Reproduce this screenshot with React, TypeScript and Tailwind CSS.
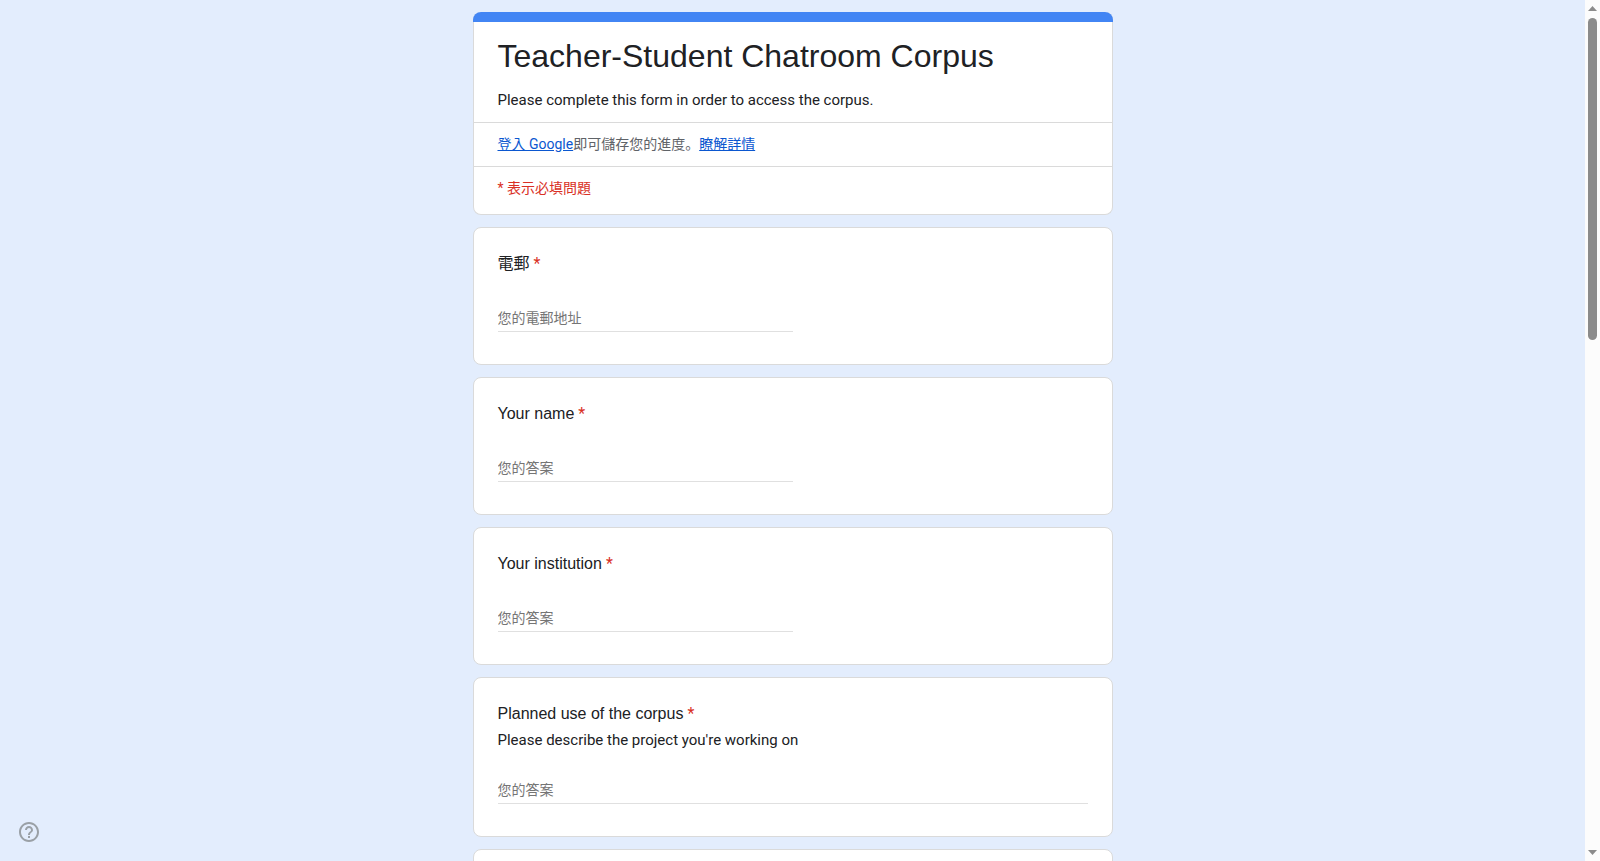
import { useId } from 'react';

type Question = {
  label: string;
  placeholder: string;
  description?: string;
  type?: 'text' | 'email';
  long?: boolean;
};

const questions: Question[] = [
  { label: '電郵', placeholder: '您的電郵地址', type: 'email' },
  { label: 'Your name', placeholder: '您的答案' },
  { label: 'Your institution', placeholder: '您的答案' },
  {
    label: 'Planned use of the corpus',
    description: "Please describe the project you're working on",
    placeholder: '您的答案',
    long: true,
  },
];

function QuestionCard({ label, placeholder, description, type = 'text', long }: Question) {
  const id = useId();
  return (
    <section className="rounded-lg border border-[#dadada] bg-white px-6 pt-6 pb-8">
      <label
        htmlFor={id}
        className="flex gap-1 font-['Liberation_Sans','Noto_Sans_CJK_JP',sans-serif] text-base leading-6 text-[#202124]"
      >
        <span>{label}</span>
        <span className="font-['Roboto',sans-serif] text-[#d93025]">*</span>
      </label>
      {description && <p className="mt-1 text-[15px] leading-5 text-[#202124]">{description}</p>}
      {long ? (
        <textarea
          id={id}
          rows={1}
          placeholder={placeholder}
          className="mt-6 block h-[30px] w-full resize-none overflow-hidden border-b border-[#e0e0e0] pt-1 text-sm leading-6 outline-none placeholder:text-[#757575]"
        />
      ) : (
        <input
          id={id}
          type={type}
          placeholder={placeholder}
          className="mt-6 block h-8 w-1/2 border-b border-[#e0e0e0] pt-1 text-sm leading-6 outline-none placeholder:text-[#757575]"
        />
      )}
    </section>
  );
}

function Scrollbar() {
  return (
    <div aria-hidden="true" className="flex w-[15px] shrink-0 flex-col items-center bg-[#fcfcfc] py-1.5">
      <svg className="h-[5px] w-[9px]" viewBox="0 0 9 5" fill="#8b8b8b">
        <path d="M4.5 0 9 5H0z" />
      </svg>
      <div className="flex w-[9px] grow flex-col py-[7px]">
        <div className="h-[39%] rounded-full bg-[#8b8b8b]" />
      </div>
      <svg className="h-[5px] w-[9px]" viewBox="0 0 9 5" fill="#8b8b8b">
        <path d="M0 0h9L4.5 5z" />
      </svg>
    </div>
  );
}

export default function App() {
  return (
    <div className="flex h-screen bg-[#e3edfd] font-['Roboto','Noto_Sans_CJK_JP',sans-serif]">
      <main className="min-w-0 grow overflow-y-auto px-3 [scrollbar-width:none]">
        <form className="mx-auto flex max-w-[640px] flex-col gap-3 py-3">
          <header className="rounded-lg border border-t-0 border-[#dadada] bg-white pb-1">
            <div className="-mx-px h-2.5 rounded-t-lg bg-[#4285f4]" />
            <div className="px-6 pt-3.5 pb-3 text-[#202124]">
              <h1 className="font-['Liberation_Sans',sans-serif] text-[32px] leading-10">
                Teacher-Student Chatroom Corpus
              </h1>
              <p className="mt-3.5 text-[15px] leading-5">
                Please complete this form in order to access the corpus.
              </p>
            </div>
            <p className="flex h-11 items-center border-t border-[#dadada] px-6 pb-0.5 text-sm text-[#5f6368]">
              <a href="#signin" className="text-[#0b57d0] underline">登入 Google</a>
              即可儲存您的進度。
              <a href="#learn-more" className="text-[#0b57d0] underline">瞭解詳情</a>
            </p>
            <p className="flex h-11 items-center border-t border-[#dadada] px-6 pb-0.5 text-sm text-[#d93025]">
              * 表示必填問題
            </p>
          </header>
          {questions.map((question) => (
            <QuestionCard key={question.label} {...question} />
          ))}
          <section className="h-36 rounded-lg border border-[#dadada] bg-white" />
        </form>
      </main>
      <Scrollbar />
      <button
        type="button"
        aria-label="說明"
        className="fixed bottom-[17px] left-[17px] text-[#9aa0a6]"
      >
        <svg className="size-6" viewBox="0 0 24 24" fill="currentColor">
          <path d="M11 18h2v-2h-2v2zm1-16C6.48 2 2 6.48 2 12s4.48 10 10 10 10-4.48 10-10S17.52 2 12 2zm0 18c-4.41 0-8-3.59-8-8s3.59-8 8-8 8 3.59 8 8-3.59 8-8 8zm0-14c-2.21 0-4 1.79-4 4h2c0-1.1.9-2 2-2s2 .9 2 2c0 2-3 1.75-3 5h2c0-2.25 3-2.5 3-5 0-2.21-1.79-4-4-4z" />
        </svg>
      </button>
    </div>
  );
}
